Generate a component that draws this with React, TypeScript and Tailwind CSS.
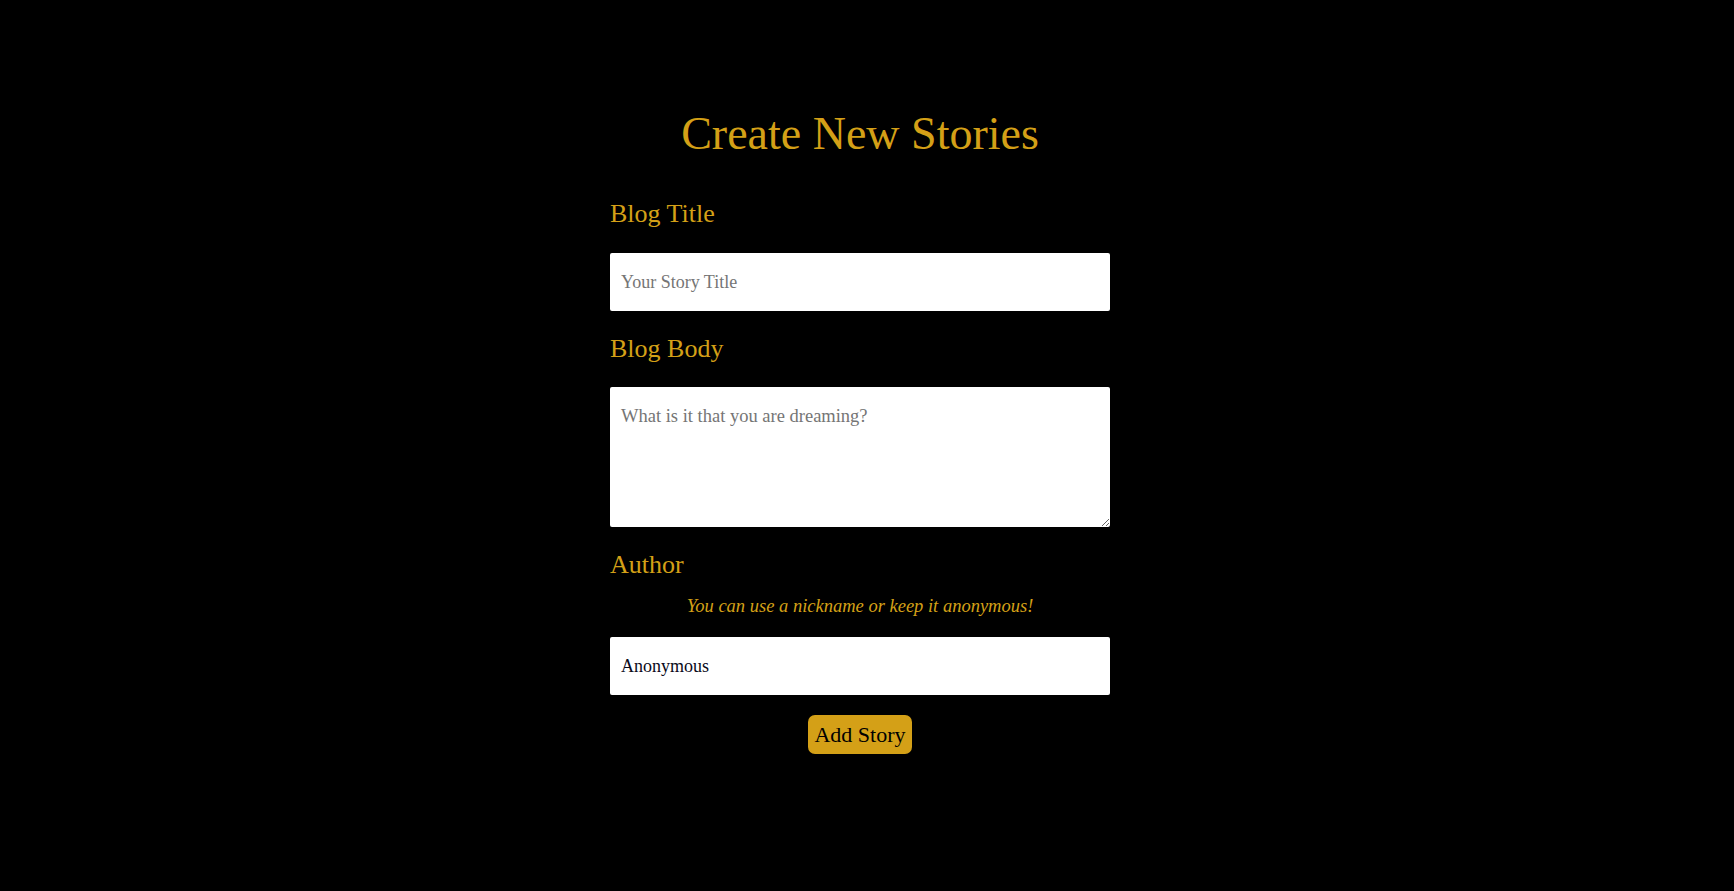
import { useState } from 'react';

export default function App() {
    const [title, setTitle] = useState('');
    const [body, setBody] = useState('');
    const [author, setAuthor] = useState('Anonymous');

    const handleSubmit = (e: React.FormEvent) => {
        e.preventDefault();
    };

    return (
        <div className="min-h-screen w-full bg-black pr-[14px] font-['Liberation_Serif',serif]">
            <div className="flex flex-col items-center">
                <h1 className="mt-[111px] text-[46px] leading-[45px] text-[#d4a017]">Create New Stories</h1>

                <form onSubmit={handleSubmit} className="flex w-[500px] flex-col">
                    <label className="mt-[45px] text-[26px] leading-[25px] text-[#d4a017]">Blog Title</label>
                    <input
                        type="text"
                        value={title}
                        onChange={(e) => setTitle(e.target.value)}
                        placeholder="Your Story Title"
                        className="mt-[27px] h-[58px] w-full rounded-[2px] bg-white px-[11px] text-[18px] text-black outline-none placeholder:text-[#757575]"
                    />

                    <label className="mt-[25px] text-[26px] leading-[25px] text-[#d4a017]">Blog Body</label>
                    <textarea
                        value={body}
                        onChange={(e) => setBody(e.target.value)}
                        placeholder="What is it that you are dreaming?"
                        className="mt-[26px] h-[140px] w-full rounded-[2px] bg-white px-[11px] pt-[19px] text-[18.5px] leading-[20px] text-black outline-none placeholder:text-[#757575]"
                    />

                    <label className="mt-[25px] text-[26px] leading-[25px] text-[#d4a017]">Author</label>
                    <p className="mt-[20px] text-center text-[18.5px] italic leading-[18px] text-[#d4a017]">
                        You can use a nickname or keep it anonymous!
                    </p>
                    <input
                        type="text"
                        value={author}
                        onChange={(e) => setAuthor(e.target.value)}
                        className="mt-[22px] h-[58px] w-full rounded-[2px] bg-white px-[11px] text-[18px] text-[#0a0a1a] outline-none"
                    />

                    <button
                        type="submit"
                        className="mx-auto mt-[20px] h-[39px] w-[104px] rounded-[7px] bg-[#d4a017] text-[22px] leading-[22px] text-black"
                    >
                        Add Story
                    </button>
                </form>
            </div>
        </div>
    );
}
